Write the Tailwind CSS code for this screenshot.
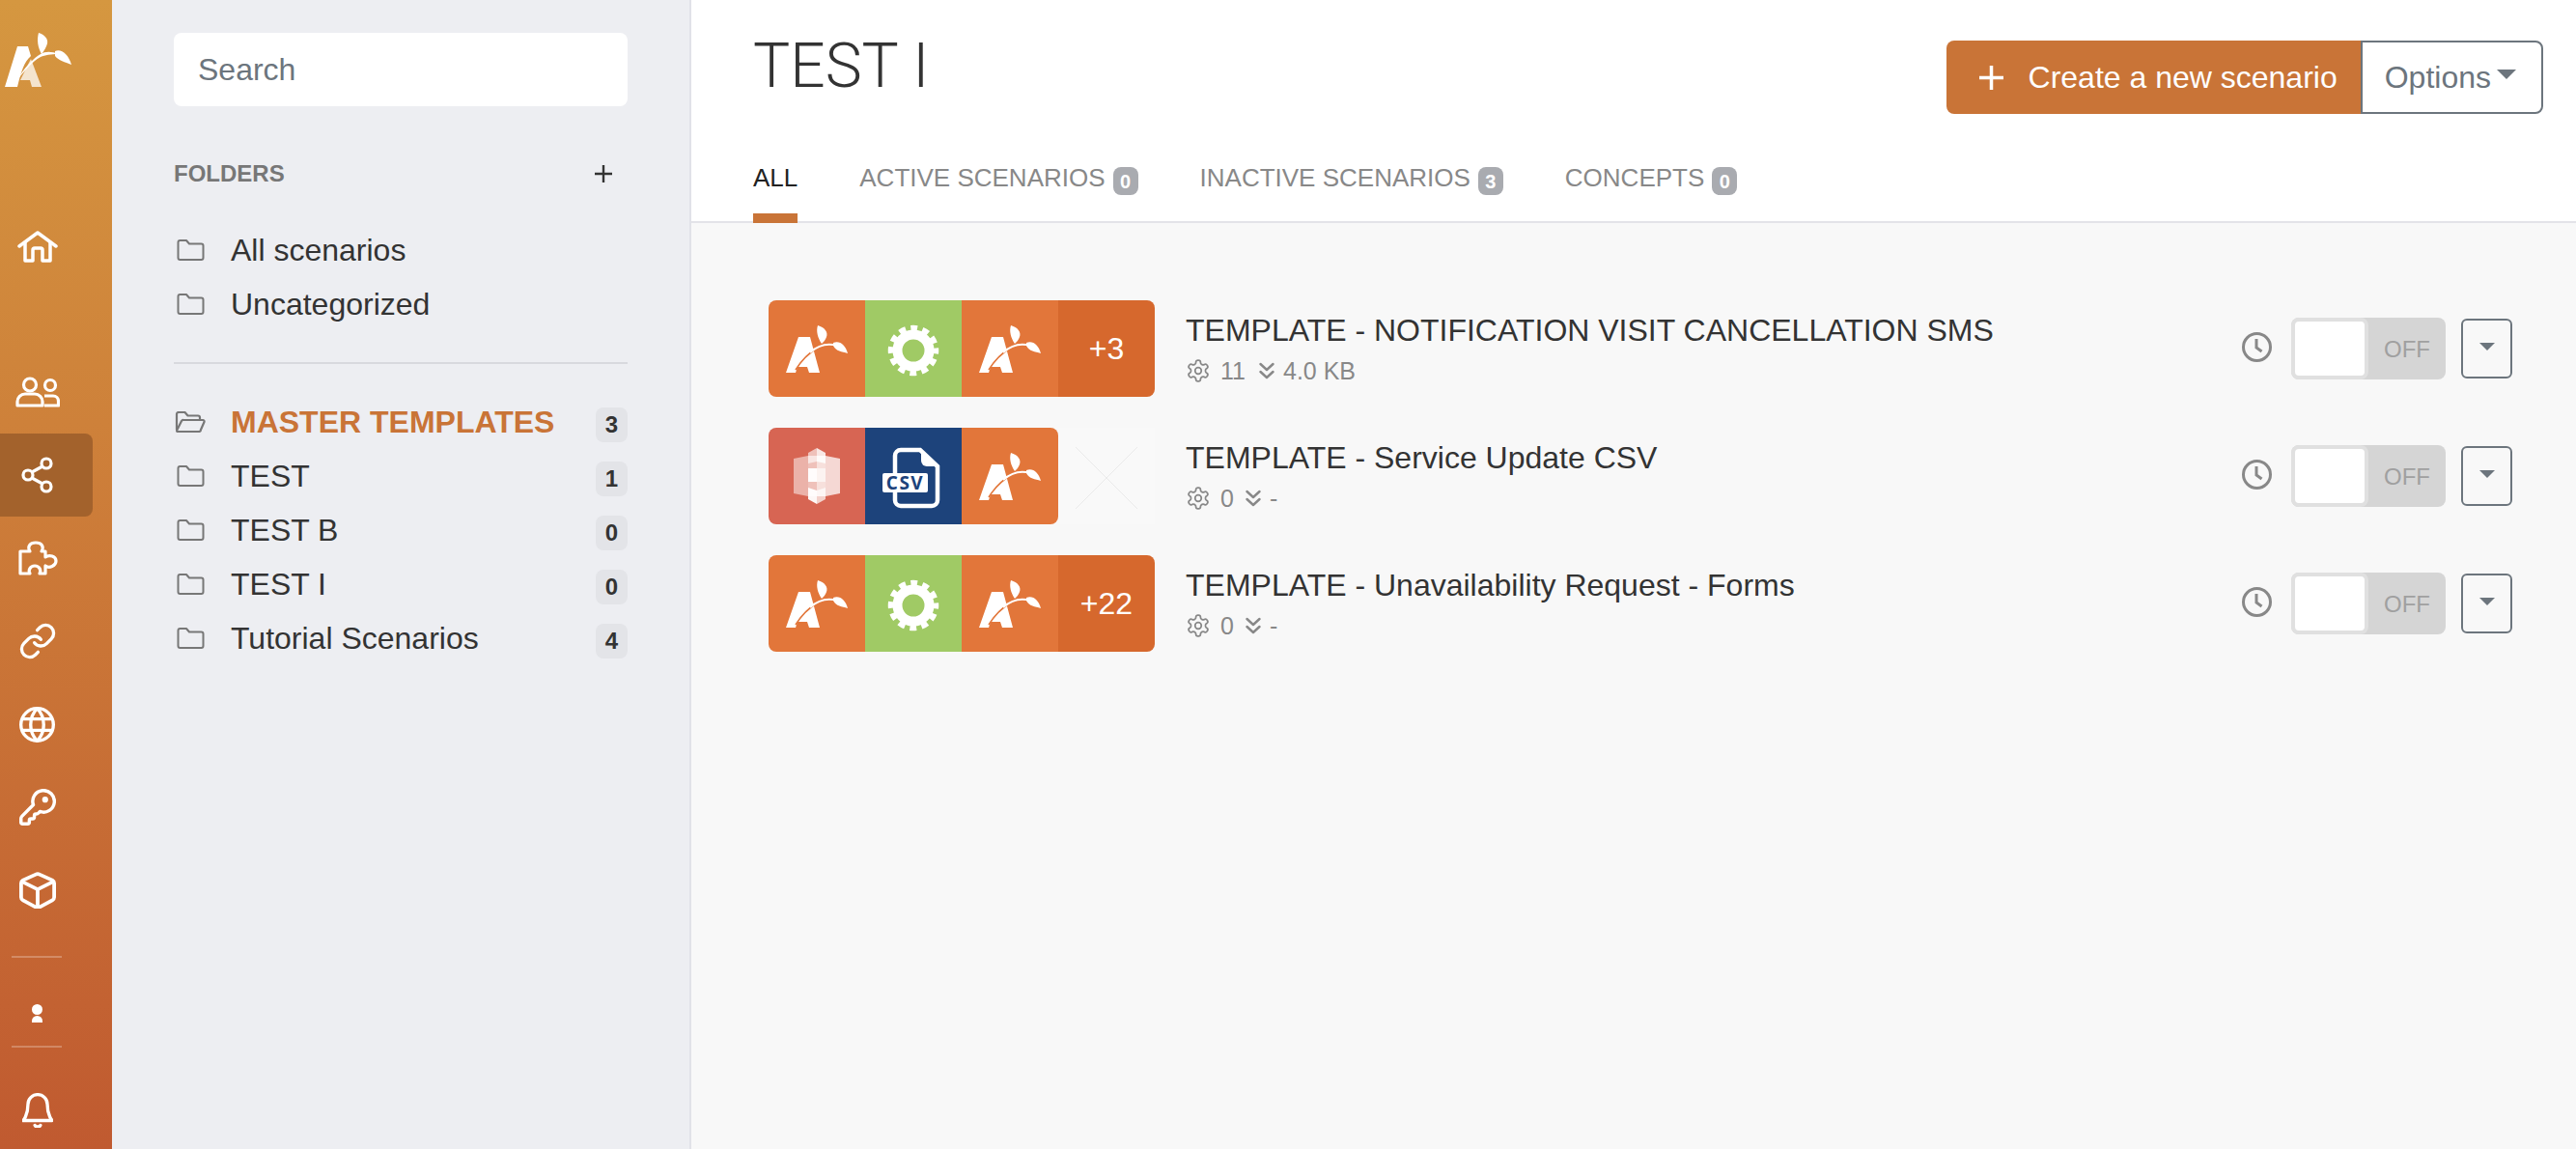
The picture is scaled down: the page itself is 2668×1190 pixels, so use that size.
<!DOCTYPE html>
<html lang="en">
<head>
<meta charset="utf-8">
<title>Scenarios</title>
<script src="https://cdn.jsdelivr.net/npm/@tailwindcss/browser@4"></script>
</head>
<body class="bg-[#f8f8f8] font-['Liberation_Sans',Arial,sans-serif] text-[#333] overflow-hidden">
<svg class="hidden" aria-hidden="true">
  <symbol id="folder" viewBox="0 0 30 22"><path d="M2 5V3a2 2 0 0 1 2-2h6.500l3 3.500H26a2 2 0 0 1 2 2V19a2 2 0 0 1-2 2H4a2 2 0 0 1-2-2Z" fill="none" stroke="#777" stroke-width="2" stroke-linejoin="round"/></symbol>
  <symbol id="logo" viewBox="0 0 64 49">
    <path d="M0 49 13 12H25L35 49H24L22 43H12L10 49Z" fill="#fff"/>
    <path d="M10 46C15 38 23 29 33 23" fill="none" stroke="currentColor" stroke-width="1.600"/>
    <path d="M25 28C33 21 43 18 53 21" fill="none" stroke="#fff" stroke-width="2.200"/>
    <path d="M33 0C40 2 44 7 42 12 41 15 39 17 37 19 33 13 31 6 33 0Z" fill="#fff"/>
    <path d="M49 18C55 15 62 20 64 29 58 27 52 27 49 21Z" fill="#fff"/>
  </symbol>
  <symbol id="cog" viewBox="0 0 56 56">
    <circle cx="28" cy="28" r="16.500" fill="none" stroke="#fff" stroke-width="10"/>
    <circle cx="28" cy="28" r="23.500" fill="none" stroke="#fff" stroke-width="5.500" stroke-dasharray="7 5.305" stroke-dashoffset="3.500"/>
  </symbol>
  <symbol id="gear" viewBox="1 1 22 22"><g fill="none" stroke="#888" stroke-width="1.600" stroke-linecap="round" stroke-linejoin="round"><path d="M12.220 2h-.44a2 2 0 0 0-2 2v.18a2 2 0 0 1-1 1.730l-.43.25a2 2 0 0 1-2 0l-.15-.08a2 2 0 0 0-2.730.73l-.22.38a2 2 0 0 0 .73 2.730l.15.1a2 2 0 0 1 1 1.720v.51a2 2 0 0 1-1 1.740l-.15.09a2 2 0 0 0-.73 2.730l.22.38a2 2 0 0 0 2.730.73l.15-.08a2 2 0 0 1 2 0l.43.25a2 2 0 0 1 1 1.730V20a2 2 0 0 0 2 2h.44a2 2 0 0 0 2-2v-.18a2 2 0 0 1 1-1.730l.43-.25a2 2 0 0 1 2 0l.15.08a2 2 0 0 0 2.730-.73l.22-.39a2 2 0 0 0-.73-2.730l-.15-.08a2 2 0 0 1-1-1.740v-.5a2 2 0 0 1 1-1.740l.15-.09a2 2 0 0 0 .73-2.730l-.22-.38a2 2 0 0 0-2.730-.73l-.15.08a2 2 0 0 1-2 0l-.43-.25a2 2 0 0 1-1-1.730V4a2 2 0 0 0-2-2z"/><circle cx="12" cy="12" r="3"/></g></symbol>
  <symbol id="chev" viewBox="0 0 16 18"><path d="M1.500 2 8 8l6.500-6M1.500 10 8 16l6.500-6" fill="none" stroke="#888" stroke-width="2.400" stroke-linecap="round" stroke-linejoin="round"/></symbol>
  <symbol id="clock" viewBox="0 0 31 31"><circle cx="15.500" cy="15.500" r="14" fill="none" stroke="#888" stroke-width="3"/><path d="M15 7v9l5.500 4" fill="none" stroke="#888" stroke-width="3"/></symbol>
</svg>

<div class="flex h-[1190px] w-[2668px]">
  <!-- icon rail -->
  <nav class="flex w-[116px] shrink-0 flex-col bg-linear-to-b from-[#d59740] to-[#c05a30]">
    <svg class="mt-[34px] ml-[5px] h-[58px] w-[70px]" viewBox="0 0 70 58">
      <path d="M27 27 38 56H28L26 49H16Z" fill="#fff" fill-opacity=".75"/>
      <path d="M0 56 13 14H24L27 24C20 30 17 40 13 56Z" fill="#fff"/>
      <path d="M12 50C20 36 30 26 37 22 42 19 48 19 56 22 47 22 42 23 37 25 28 30 20 40 12 50Z" fill="#fff"/>
      <path d="M35 0C41 2 45 6 44 11 43 15 41 18 38 22 34 15 33 7 35 0Z" fill="#fff"/>
      <path d="M52 19C58 16 66 22 69 33 62 30 56 29 52 24Z" fill="#fff"/>
    </svg>
    <div class="mt-[120px] flex h-[86px] w-[77px] items-center justify-center">
      <svg class="h-[33px] w-[42px]" viewBox="0 0 42 33" fill="none" stroke="#fff" stroke-width="3.500" stroke-linecap="round" stroke-linejoin="round"><path d="M2 16 21 2l19 14"/><path d="M8 12v19h8V20a2 2 0 0 1 2-2h6a2 2 0 0 1 2 2v11h8V12"/></svg>
    </div>
    <div class="mt-[65px] flex h-[86px] w-[77px] items-center justify-center">
      <svg class="h-[32px] w-[46px]" viewBox="0 0 46 32" fill="none" stroke="#fff" stroke-width="3.200" stroke-linejoin="round"><circle cx="15" cy="8.500" r="6.500"/><path d="M2 30v-4a8 8 0 0 1 8-8h10a8 8 0 0 1 8 8v4Z"/><circle cx="36" cy="9" r="5.500"/><path d="M30 20h9a5.500 5.500 0 0 1 5.500 5.500V30H30"/></svg>
    </div>
    <div class="flex h-[86px] w-[96px] rounded-r-lg bg-[#a3622c]">
      <div class="flex h-full w-[77px] items-center justify-center">
        <svg class="h-[38px] w-[33px]" viewBox="0 0 33 38" fill="none" stroke="#fff" stroke-width="3.200"><circle cx="7" cy="19" r="5"/><circle cx="26" cy="7" r="5"/><circle cx="26" cy="31" r="5"/><path d="m11 16 11-6M11 22l11 6"/></svg>
      </div>
    </div>
    <div class="flex h-[86px] w-[77px] items-center justify-center">
      <svg class="h-[36px] w-[42px]" viewBox="0 0 42 36" fill="none" stroke="#fff" stroke-width="3.200" stroke-linejoin="round"><path d="M3 34V11h10c-3-5 0-9 6-9s9 4 6 9h4v6c4-3 11-1 11 4s-7 8-11 5v8h-6c2-3 0-8-5-8s-7 5-5 8Z"/></svg>
    </div>
    <div class="flex h-[86px] w-[77px] items-center justify-center">
      <svg class="h-[40px] w-[40px]" viewBox="0 0 24 24" fill="none" stroke="#fff" stroke-width="2" stroke-linecap="round" stroke-linejoin="round"><path d="M10 13a5 5 0 0 0 7.540.54l3-3a5 5 0 0 0-7.070-7.070l-1.720 1.710"/><path d="M14 11a5 5 0 0 0-7.540-.54l-3 3a5 5 0 0 0 7.070 7.070l1.710-1.710"/></svg>
    </div>
    <div class="flex h-[86px] w-[77px] items-center justify-center">
      <svg class="h-[37px] w-[37px]" viewBox="1 1 22 22" fill="none" stroke="#fff" stroke-width="2"><circle cx="12" cy="12" r="10"/><path d="M12 2a14.500 14.500 0 0 0 0 20 14.500 14.500 0 0 0 0-20M2.800 8.500h18.400M2.800 15.500h18.400"/></svg>
    </div>
    <div class="flex h-[86px] w-[77px] items-center justify-center">
      <svg class="h-[38px] w-[38px]" viewBox="1 1 22 22" fill="none" stroke="#fff" stroke-width="2" stroke-linejoin="round"><path d="M2.586 17.414A2 2 0 0 0 2 18.828V21a1 1 0 0 0 1 1h3a1 1 0 0 0 1-1v-1a1 1 0 0 1 1-1h1a1 1 0 0 0 1-1v-1a1 1 0 0 1 1-1h.172a2 2 0 0 0 1.414-.586l.814-.814a6.500 6.500 0 1 0-4-4z"/><circle cx="16.500" cy="7.500" r=".8" fill="#fff"/></svg>
    </div>
    <div class="flex h-[86px] w-[77px] items-center justify-center">
      <svg class="h-[38px] w-[38px]" viewBox="2 1.500 20 21" preserveAspectRatio="none" fill="none" stroke="#fff" stroke-width="2" stroke-linejoin="round"><path d="M21 8a2 2 0 0 0-1-1.730l-7-3.300a2 2 0 0 0-2 0l-7 3.300A2 2 0 0 0 3 8v8a2 2 0 0 0 1 1.730l7 4a2 2 0 0 0 2 0l7-4A2 2 0 0 0 21 16Z"/><path d="m3.300 7 8.700 4.500L20.700 7M12 22V11.500"/></svg>
    </div>
    <div class="mt-[25px] ml-[12px] h-[2px] w-[52px] bg-white/25"></div>
    <div class="mt-[48px] ml-[33px] flex w-[11px] flex-col items-center gap-[1px]">
      <div class="h-[11px] w-[11px] rounded-full bg-white"></div>
      <div class="h-[7px] w-[11px] rounded-t-[6px] bg-white"></div>
    </div>
    <div class="mt-[24px] ml-[12px] h-[2px] w-[52px] bg-white/25"></div>
    <div class="mt-[47px] flex w-[77px] items-center justify-center">
      <svg class="h-[36px] w-[32px]" viewBox="2.500 1 19 21.500" fill="none" stroke="#fff" stroke-width="2" stroke-linecap="round" stroke-linejoin="round"><path d="M6 8a6 6 0 0 1 12 0c0 7 3 10 3 10H3s3-3 3-10M12 1.500V2"/><path d="M10.300 21a1.940 1.940 0 0 0 3.400 0" fill="#fff"/></svg>
    </div>
  </nav>

  <!-- folders -->
  <aside class="w-[600px] shrink-0 border-r-2 border-[#e1e2e8] bg-[#edeef2] pt-[34px] pr-[64px] pl-[64px]">
    <input class="block h-[76px] w-full rounded-lg bg-white px-[25px] text-[32px] outline-none placeholder:text-[#6c757d]" placeholder="Search">
    <div class="mt-[50px] flex h-[40px] items-center justify-between">
      <span class="text-[24px] font-bold text-[#777]">FOLDERS</span>
      <svg class="mr-[16px] h-[18px] w-[18px]" viewBox="0 0 18 18"><path d="M9 0v18M0 9h18" stroke="#333" stroke-width="2.400"/></svg>
    </div>
    <ul class="mt-[31px]">
      <li class="flex h-[56px] items-center text-[32px]"><svg class="mr-[26px] ml-[2px] h-[22px] w-[31px]"><use href="#folder"/></svg>All scenarios</li>
      <li class="flex h-[56px] items-center text-[32px]"><svg class="mr-[26px] ml-[2px] h-[22px] w-[31px]"><use href="#folder"/></svg>Uncategorized</li>
    </ul>
    <div class="mt-[32px] h-[2px] bg-[#d8d9de]"></div>
    <ul class="mt-[32px]">
      <li class="flex h-[56px] items-center text-[32px]">
        <svg class="mr-[26px] ml-[1px] h-[22px] w-[32px]" viewBox="0 0 32 22" fill="none" stroke="#777" stroke-width="2.200" stroke-linejoin="round"><path d="M2 19V3a2 2 0 0 1 2-2h6.500l3 3.500H24a2 2 0 0 1 2 2V9"/><path d="M2 20 7 10a2 2 0 0 1 2-1h20a1.500 1.500 0 0 1 1.500 2L27 19a2 2 0 0 1-2 2H3a1 1 0 0 1-1-1Z"/></svg>
        <span class="font-bold text-[#c97437]">MASTER TEMPLATES</span>
        <span class="mt-[6px] ml-auto flex h-[36px] w-[33px] items-center justify-center rounded-lg bg-[#e3e4e8] text-[24px] font-bold">3</span>
      </li>
      <li class="flex h-[56px] items-center text-[32px]"><svg class="mr-[26px] ml-[2px] h-[22px] w-[31px]"><use href="#folder"/></svg>TEST<span class="mt-[6px] ml-auto flex h-[36px] w-[33px] items-center justify-center rounded-lg bg-[#e3e4e8] text-[24px] font-bold">1</span></li>
      <li class="flex h-[56px] items-center text-[32px]"><svg class="mr-[26px] ml-[2px] h-[22px] w-[31px]"><use href="#folder"/></svg>TEST B<span class="mt-[6px] ml-auto flex h-[36px] w-[33px] items-center justify-center rounded-lg bg-[#e3e4e8] text-[24px] font-bold">0</span></li>
      <li class="flex h-[56px] items-center text-[32px]"><svg class="mr-[26px] ml-[2px] h-[22px] w-[31px]"><use href="#folder"/></svg>TEST I<span class="mt-[6px] ml-auto flex h-[36px] w-[33px] items-center justify-center rounded-lg bg-[#e3e4e8] text-[24px] font-bold">0</span></li>
      <li class="flex h-[56px] items-center text-[32px]"><svg class="mr-[26px] ml-[2px] h-[22px] w-[31px]"><use href="#folder"/></svg>Tutorial Scenarios<span class="mt-[6px] ml-auto flex h-[36px] w-[33px] items-center justify-center rounded-lg bg-[#e3e4e8] text-[24px] font-bold">4</span></li>
    </ul>
  </aside>

  <!-- main -->
  <main class="min-w-0 flex-1">
    <header class="flex h-[231px] flex-col border-b-2 border-[#e3e3e8] bg-white pt-[42px] pr-[34px] pl-[64px]">
      <div class="flex items-start justify-between">
        <h1 class="font-['Roboto',sans-serif] text-[64px] leading-[54px] font-light">TEST I</h1>
        <div class="flex h-[76px]">
          <button class="flex items-center gap-[26px] rounded-l-lg bg-[#c97437] pr-[24px] pl-[34px] text-[32px] text-white">
            <svg class="h-[25px] w-[25px]" viewBox="0 0 25 25"><path d="M12.500 0v25M0 12.500h25" stroke="#fff" stroke-width="3.500"/></svg>
            Create a new scenario
          </button>
          <button class="flex items-center gap-[6px] rounded-r-lg border-2 border-[#6c757d] bg-white pr-[26px] pl-[23px] text-[32px] text-[#6c757d]">
            Options
            <span class="mb-[6px] h-0 w-0 border-x-[10px] border-t-[10px] border-x-transparent border-t-[#6c757d]"></span>
          </button>
        </div>
      </div>
      <div class="mt-auto -mb-[2px] flex gap-[64px] text-[26px] leading-[48px] text-[#888]">
        <div class="h-[71px] border-b-[10px] border-[#c97437] text-[#222]">ALL</div>
        <div class="flex h-[71px] items-start gap-[8px]">ACTIVE SCENARIOS<span class="mt-[13px] flex h-[29px] w-[26px] items-center justify-center rounded-lg bg-[#a9abb0] text-[20px] leading-none font-bold text-white">0</span></div>
        <div class="flex h-[71px] items-start gap-[8px]">INACTIVE SCENARIOS<span class="mt-[13px] flex h-[29px] w-[26px] items-center justify-center rounded-lg bg-[#a9abb0] text-[20px] leading-none font-bold text-white">3</span></div>
        <div class="flex h-[71px] items-start gap-[8px]">CONCEPTS<span class="mt-[13px] flex h-[29px] w-[26px] items-center justify-center rounded-lg bg-[#a9abb0] text-[20px] leading-none font-bold text-white">0</span></div>
      </div>
    </header>

    <section class="flex flex-col gap-[32px] pt-[80px] pr-[66px] pl-[80px]">
      <!-- row 1 -->
      <article class="flex h-[100px] items-center">
        <div class="flex w-[400px] shrink-0 overflow-hidden rounded-lg text-[32px] text-white">
          <div class="flex h-[100px] w-[100px] items-center justify-center bg-[#e2763a] text-[#e2763a]"><svg class="h-[49px] w-[64px]"><use href="#logo"/></svg></div>
          <div class="flex h-[100px] w-[100px] items-center justify-center bg-[#a0ca65] pt-[4px]"><svg class="h-[56px] w-[56px]"><use href="#cog"/></svg></div>
          <div class="flex h-[100px] w-[100px] items-center justify-center bg-[#e2763a] text-[#e2763a]"><svg class="h-[49px] w-[64px]"><use href="#logo"/></svg></div>
          <div class="flex h-[100px] w-[100px] items-center justify-center bg-[#d6682d]">+3</div>
        </div>
        <div class="ml-[32px] min-w-0">
          <div class="text-[32px] leading-[40px]">TEMPLATE - NOTIFICATION VISIT CANCELLATION SMS</div>
          <div class="mt-[6px] flex items-center text-[25px] leading-[32px] text-[#888]"><svg class="mr-[11px] ml-[1px] h-[24px] w-[24px]"><use href="#gear"/></svg><span class="w-[40px]">11</span><svg class="mr-[9px] h-[18px] w-[16px]"><use href="#chev"/></svg>4.0 KB</div>
        </div>
        <div class="ml-auto flex items-center">
          <svg class="mb-[3px] h-[31px] w-[31px]"><use href="#clock"/></svg>
          <div class="ml-[20px] flex h-[64px] w-[160px] rounded-lg bg-[#d5d5d5]">
            <div class="w-[80px] rounded-lg border-4 border-[#e0e0e0] bg-white"></div>
            <div class="flex-1 pt-[2px] text-center text-[24px] leading-[62px] text-[#a0a0a0]">OFF</div>
          </div>
          <button class="ml-[16px] flex h-[62px] w-[53px] items-center justify-center rounded-md border-2 border-[#6c757d]" aria-label="Menu"><span class="mb-[5px] h-0 w-0 border-x-[8.5px] border-t-[8px] border-x-transparent border-t-[#6c757d]"></span></button>
        </div>
      </article>
      <!-- row 2 -->
      <article class="flex h-[100px] items-center">
        <div class="flex w-[400px] shrink-0">
          <div class="flex overflow-hidden rounded-lg">
            <div class="flex h-[100px] w-[100px] items-center justify-center bg-[#d76553]">
              <svg class="h-[58px] w-[48px]" viewBox="26 23 48 58">
                <path d="M26 34 41 31V73L26 70Z" fill="#fff" fill-opacity=".5"/>
                <path d="M74 34 59 31V73L74 70Z" fill="#fff" fill-opacity=".75"/>
                <path d="M41 31H50V73H41Z" fill="#fff" fill-opacity=".6"/>
                <path d="M50 31H59V73H50Z" fill="#fff" fill-opacity=".8"/>
                <path d="M41 28 50 23V37L41 39Z" fill="#fff" fill-opacity=".6"/>
                <path d="M59 28 50 23V37L59 39Z" fill="#fff" fill-opacity=".85"/>
                <path d="M41 44H50V58H41Z" fill="#fff" fill-opacity=".95"/>
                <path d="M50 44H59V58H50Z" fill="#fff" fill-opacity=".6"/>
                <path d="M41 64 50 67V81L41 76Z" fill="#fff" fill-opacity=".95"/>
                <path d="M59 64 50 67V81L59 76Z" fill="#fff" fill-opacity=".7"/>
              </svg>
            </div>
            <div class="h-[100px] w-[100px] bg-[#1d437b]">
              <svg class="h-[100px] w-[100px]" viewBox="0 0 100 100">
                <path d="M31 47V29a6 6 0 0 1 6-6H57L75 40V75a6 6 0 0 1-6 6H37a6 6 0 0 1-6-6V67" fill="none" stroke="#fff" stroke-width="4.500"/>
                <path d="M58 24 74 40H64a6 6 0 0 1-6-6Z" fill="#fff"/>
                <rect x="18" y="47" width="47" height="20" rx="2" fill="#fff"/>
                <text x="41.500" y="64" text-anchor="middle" font-family="Open Sans, sans-serif" font-weight="700" font-size="19" letter-spacing="1.500" fill="#1d437b">CSV</text>
              </svg>
            </div>
            <div class="flex h-[100px] w-[100px] items-center justify-center bg-[#e2763a] text-[#e2763a]"><svg class="h-[49px] w-[64px]"><use href="#logo"/></svg></div>
          </div>
          <svg class="h-[100px] w-[100px] bg-[#f9f9f9]" viewBox="0 0 100 100"><path d="M18 20 82 84M82 20 18 84" stroke="#eaeaea" stroke-width="1"/></svg>
        </div>
        <div class="ml-[32px] min-w-0">
          <div class="text-[32px] leading-[40px]">TEMPLATE - Service Update CSV</div>
          <div class="mt-[6px] flex items-center text-[25px] leading-[32px] text-[#888]"><svg class="mr-[11px] ml-[1px] h-[24px] w-[24px]"><use href="#gear"/></svg><span class="w-[26px]">0</span><svg class="mr-[9px] h-[18px] w-[16px]"><use href="#chev"/></svg>-</div>
        </div>
        <div class="ml-auto flex items-center">
          <svg class="mb-[3px] h-[31px] w-[31px]"><use href="#clock"/></svg>
          <div class="ml-[20px] flex h-[64px] w-[160px] rounded-lg bg-[#d5d5d5]">
            <div class="w-[80px] rounded-lg border-4 border-[#e0e0e0] bg-white"></div>
            <div class="flex-1 pt-[2px] text-center text-[24px] leading-[62px] text-[#a0a0a0]">OFF</div>
          </div>
          <button class="ml-[16px] flex h-[62px] w-[53px] items-center justify-center rounded-md border-2 border-[#6c757d]" aria-label="Menu"><span class="mb-[5px] h-0 w-0 border-x-[8.5px] border-t-[8px] border-x-transparent border-t-[#6c757d]"></span></button>
        </div>
      </article>
      <!-- row 3 -->
      <article class="flex h-[100px] items-center">
        <div class="flex w-[400px] shrink-0 overflow-hidden rounded-lg text-[32px] text-white">
          <div class="flex h-[100px] w-[100px] items-center justify-center bg-[#e2763a] text-[#e2763a]"><svg class="h-[49px] w-[64px]"><use href="#logo"/></svg></div>
          <div class="flex h-[100px] w-[100px] items-center justify-center bg-[#a0ca65] pt-[4px]"><svg class="h-[56px] w-[56px]"><use href="#cog"/></svg></div>
          <div class="flex h-[100px] w-[100px] items-center justify-center bg-[#e2763a] text-[#e2763a]"><svg class="h-[49px] w-[64px]"><use href="#logo"/></svg></div>
          <div class="flex h-[100px] w-[100px] items-center justify-center bg-[#d6682d]">+22</div>
        </div>
        <div class="ml-[32px] min-w-0">
          <div class="text-[32px] leading-[40px]">TEMPLATE - Unavailability Request - Forms</div>
          <div class="mt-[6px] flex items-center text-[25px] leading-[32px] text-[#888]"><svg class="mr-[11px] ml-[1px] h-[24px] w-[24px]"><use href="#gear"/></svg><span class="w-[26px]">0</span><svg class="mr-[9px] h-[18px] w-[16px]"><use href="#chev"/></svg>-</div>
        </div>
        <div class="ml-auto flex items-center">
          <svg class="mb-[3px] h-[31px] w-[31px]"><use href="#clock"/></svg>
          <div class="ml-[20px] flex h-[64px] w-[160px] rounded-lg bg-[#d5d5d5]">
            <div class="w-[80px] rounded-lg border-4 border-[#e0e0e0] bg-white"></div>
            <div class="flex-1 pt-[2px] text-center text-[24px] leading-[62px] text-[#a0a0a0]">OFF</div>
          </div>
          <button class="ml-[16px] flex h-[62px] w-[53px] items-center justify-center rounded-md border-2 border-[#6c757d]" aria-label="Menu"><span class="mb-[5px] h-0 w-0 border-x-[8.5px] border-t-[8px] border-x-transparent border-t-[#6c757d]"></span></button>
        </div>
      </article>
    </section>
  </main>
</div>
</body>
</html>
